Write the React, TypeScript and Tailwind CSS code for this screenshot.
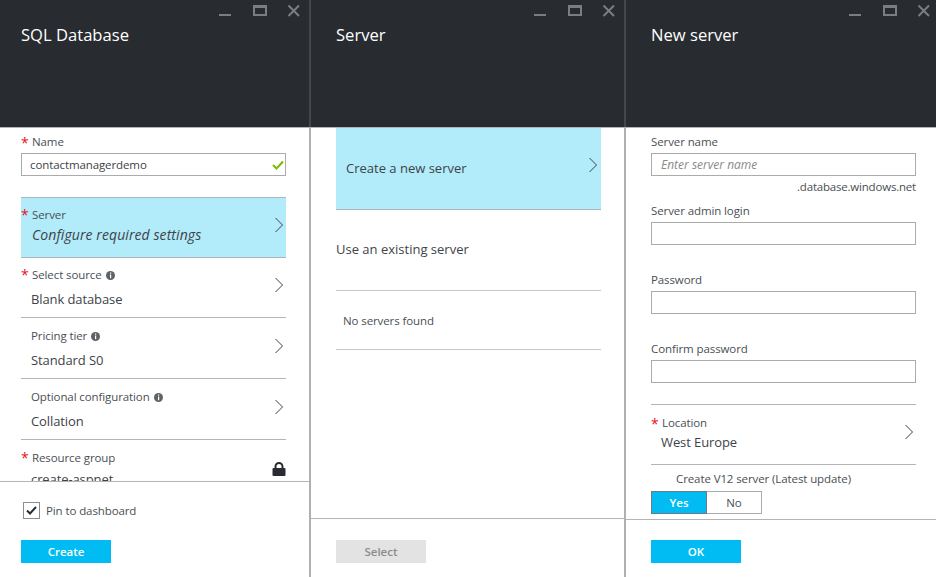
import React from 'react';

const Chevron = ({ className = '' }: { className?: string }) => (
    <svg width="10" height="16" viewBox="0 0 10 16" fill="none" className={className}>
        <path d="M1.5 1 L8.5 8 L1.5 15" stroke="#3e4348" strokeWidth="1" />
    </svg>
);

const Info = () => (
    <svg width="9" height="9" viewBox="0 0 9 9" className="ml-[4px] shrink-0">
        <circle cx="4.5" cy="4.5" r="4.5" fill="#5f6367" />
        <rect x="4" y="1.5" width="1.2" height="1.2" fill="#fff" />
        <rect x="4" y="3.5" width="1.2" height="3.7" fill="#fff" />
    </svg>
);

const Star = ({ className }: { className: string }) => (
    <span className={`absolute left-0 text-[14px] leading-[15px] text-[#e81123] ${className}`}>*</span>
);

const PanelHeader = ({ title, iconsClass, padClass }: { title: string; iconsClass: string; padClass: string }) => (
    <div className={`h-[127px] shrink-0 bg-[#282c30] ${padClass}`}>
        <div className={`flex h-[20px] items-start justify-end ${iconsClass}`}>
            <svg width="13" height="17" viewBox="0 0 13 17">
                <rect x="1" y="14" width="12" height="2" fill="#7a7e82" />
            </svg>
            <svg width="15" height="17" viewBox="0 0 15 17" className="ml-[21px]">
                <rect x="2" y="6" width="12" height="9" fill="none" stroke="#7a7e82" strokeWidth="2" />
                <rect x="1" y="5" width="14" height="3" fill="#7a7e82" />
            </svg>
            <svg width="13" height="17" viewBox="0 0 13 17" className="ml-[20px]">
                <path d="M1.5 5.5 L12 16 M12 5.5 L1.5 16" stroke="#7a7e82" strokeWidth="2" />
            </svg>
        </div>
        <h2 className="mt-[2px] text-[16.6px] leading-[26px] text-white">{title}</h2>
    </div>
);

const Label = ({ children, className = '' }: { children: React.ReactNode; className?: string }) => (
    <div className={`text-[11.5px] leading-[16px] tracking-[-0.1px] text-[#4a4f54] ${className}`}>{children}</div>
);

const TextBox = ({ placeholder }: { placeholder?: string }) => (
    <div className="flex h-[23px] items-center border border-[#ababab] bg-white px-[9px] text-[12px] italic text-[#8a8a8a]">
        {placeholder}
    </div>
);

const BladeRow = ({ label, value, required, info, first }: { label: string; value: string; required?: boolean; info?: boolean; first?: boolean }) => (
    <div className={`relative border-b border-[#b4b4b4] pl-[10px] ${first ? 'h-[60px] pt-[9px]' : 'h-[61px] pt-[10px]'}`}>
        {required && <Star className="top-[9px]" />}
        <div className={`flex items-center ${required ? 'ml-[1px]' : ''}`}>
            <Label>{label}</Label>
            {info && <Info />}
        </div>
        <div className="mt-[7px] text-[13px] leading-[18px] tracking-[-0.1px] text-[#3e4348]">{value}</div>
        <Chevron className={`absolute right-[2px] ${first ? 'top-[19px]' : 'top-[20px]'}`} />
    </div>
);

const ActionButton = ({ text, disabled }: { text: string; disabled?: boolean }) => (
    <button className={`block h-[23px] w-[90px] text-[11.5px] font-semibold ${disabled ? 'bg-[#e3e3e3] text-[#8c8c8c]' : 'bg-[#00bcf2] text-white'}`}>
        {text}
    </button>
);

const Divider = () => (
    <div className="flex w-[2px] shrink-0 flex-col">
        <div className="h-[127px] bg-[#42474c]" />
        <div className="flex-1 bg-[#b0b0b0]" />
    </div>
);

export default function App() {
    return (
        <div className="flex h-[577px] w-[936px] overflow-hidden bg-white font-['Open_Sans',sans-serif]">
            {/* SQL Database */}
            <div className="flex h-full w-[309px] shrink-0 flex-col">
                <PanelHeader title="SQL Database" iconsClass="pr-[9px]" padClass="pl-[21px]" />
                <div className="h-[354px] overflow-hidden border-t border-[#b4b4b4] pl-[21px] pr-[23px]">
                    <div className="relative pl-[11px] pt-[6px]">
                        <Star className="top-[7px]" />
                        <Label>Name</Label>
                    </div>
                    <div className="mt-[3px] flex h-[23px] items-center justify-between border border-[#ababab] pl-[8px] pr-[1px] text-[11.5px] tracking-[-0.1px] text-[#3e4348]">
                        contactmanagerdemo
                        <svg width="12" height="10" viewBox="0 0 12 10" fill="none">
                            <path d="M1 5 L4.5 8.5 L11 1.5" stroke="#7fba00" strokeWidth="2" />
                        </svg>
                    </div>
                    <div className="relative mt-[21px] h-[61px] border-y border-[#a9b8bf] bg-[#b2ebfa] pl-[11px]">
                        <Star className="top-[9px]" />
                        <Label className="pt-[9px]">Server</Label>
                        <div className="mt-[3px] text-[14px] italic leading-[18px] tracking-[0.08px] text-[#3e4348]">Configure required settings</div>
                        <Chevron className="absolute right-[2px] top-[19px]" />
                    </div>
                    <BladeRow label="Select source" value="Blank database" required info first />
                    <BladeRow label="Pricing tier" value="Standard S0" info />
                    <BladeRow label="Optional configuration" value="Collation" info />
                    <div className="relative pl-[10px]">
                        <Star className="top-[10px]" />
                        <Label className="ml-[1px] pt-[10px]">Resource group</Label>
                        <div className="mt-[4px] text-[13px] leading-[18px] tracking-[-0.1px] text-[#3e4348]">create-aspnet</div>
                        <svg width="14" height="16" viewBox="0 0 14 16" className="absolute right-0 top-[22px]">
                            <rect x="0.5" y="6" width="13" height="8" rx="1" fill="#282c30" />
                            <path d="M3.5 7 V4.5 a3.5 3.5 0 0 1 7 0 V7" fill="none" stroke="#282c30" strokeWidth="2" />
                        </svg>
                    </div>
                </div>
                <div className="flex-1 border-t border-[#b4b4b4] pl-[21px]">
                    <div className="mt-[20px] flex h-[17px] items-center pl-[2px]">
                        <div className="flex h-[17px] w-[17px] items-center justify-center border border-[#8c8c8c]">
                            <svg width="11" height="9" viewBox="0 0 11 9" fill="none">
                                <path d="M1 4.5 L4 7.5 L10 1" stroke="#282c30" strokeWidth="2" />
                            </svg>
                        </div>
                        <span className="ml-[6px] pt-[1px] text-[11.5px] tracking-[-0.1px] text-[#4a4f54]">Pin to dashboard</span>
                    </div>
                    <div className="mt-[21px]">
                        <ActionButton text="Create" />
                    </div>
                </div>
            </div>
            <Divider />

            {/* Server */}
            <div className="flex h-full w-[313px] shrink-0 flex-col">
                <PanelHeader title="Server" iconsClass="pr-[9px]" padClass="pl-[25px]" />
                <div className="h-[391px] border-t border-[#b4b4b4] pl-[25px] pr-[23px]">
                    <div className="relative flex h-[82px] items-center border-b border-[#a9b8bf] bg-[#b2ebfa] pl-[10px] text-[13px] text-[#3e4348]">
                        Create a new server
                        <Chevron className="absolute right-[3px] top-[29px]" />
                    </div>
                    <div className="flex h-[81px] items-center border-b border-[#c8c8c8] text-[13px] text-[#3e4348]">Use an existing server</div>
                    <div className="flex h-[59px] items-center border-b border-[#c8c8c8] pl-[7px] pt-[2px] text-[11.5px] tracking-[-0.1px] text-[#4a4f54]">No servers found</div>
                </div>
                <div className="flex-1 border-t border-[#b4b4b4] pl-[25px] pt-[21px]">
                    <ActionButton text="Select" disabled />
                </div>
            </div>
            <Divider />

            {/* New server */}
            <div className="flex h-full min-w-0 flex-1 flex-col">
                <PanelHeader title="New server" iconsClass="pr-[6px]" padClass="pl-[25px]" />
                <div className="h-[392px] border-t border-[#b4b4b4] pl-[25px] pr-[20px]">
                    <Label className="pt-[6px]">Server name</Label>
                    <div className="mt-[3px]"><TextBox placeholder="Enter server name" /></div>
                    <div className="mt-[3px] text-right text-[11.5px] leading-[16px] tracking-[-0.2px] text-[#4a4f54]">.database.windows.net</div>
                    <Label className="mt-[8px]">Server admin login</Label>
                    <div className="mt-[3px]"><TextBox /></div>
                    <Label className="mt-[27px]">Password</Label>
                    <div className="mt-[3px]"><TextBox /></div>
                    <Label className="mt-[27px]">Confirm password</Label>
                    <div className="mt-[3px]"><TextBox /></div>
                    <div className="relative mt-[21px] h-[61px] border-y border-[#b4b4b4] pl-[10px]">
                        <Star className="top-[11px]" />
                        <Label className="ml-[1px] pt-[10px]">Location</Label>
                        <div className="mt-[2px] text-[13px] leading-[18px] tracking-[-0.1px] text-[#3e4348]">West Europe</div>
                        <Chevron className="absolute right-[2px] top-[19px]" />
                    </div>
                    <Label className="mt-[6px] pl-[25px]">Create V12 server (Latest update)</Label>
                    <div className="mt-[4px] flex h-[23px] w-[111px] text-[11.5px]">
                        <div className="flex w-[56px] items-center justify-center border border-[#6d7a82] bg-[#00bcf2] font-semibold text-white">Yes</div>
                        <div className="flex flex-1 items-center justify-center border border-l-0 border-[#ababab] text-[#4a4f54]">No</div>
                    </div>
                </div>
                <div className="flex-1 border-t border-[#b4b4b4] pl-[25px] pt-[20px]">
                    <ActionButton text="OK" />
                </div>
            </div>
        </div>
    );
}
